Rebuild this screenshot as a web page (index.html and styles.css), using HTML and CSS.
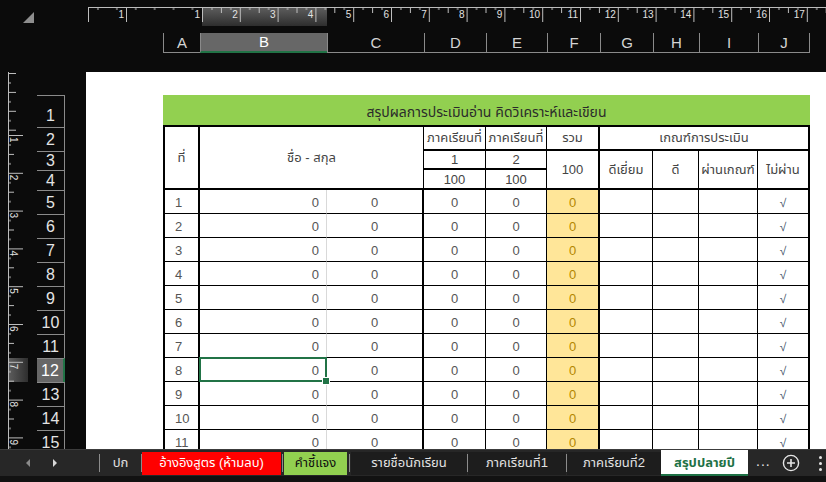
FILE: index.html
```html
<!DOCTYPE html>
<html lang="th">
<head>
<meta charset="utf-8">
<title>สรุปปลายปี</title>
<link rel="stylesheet" href="styles.css">
</head>
<body>
<div class="app">
  <div class="top">
    <div class="corner"><span class="tri"></span></div>
    <div class="topright">
      <svg class="hruler" width="738" height="19" viewBox="0 0 738 19">
        <defs>
          <linearGradient id="hl" x1="0" y1="0" x2="0" y2="1">
            <stop offset="0" stop-color="#5c5c5c"/>
            <stop offset="1" stop-color="#2e2e2e"/>
          </linearGradient>
          <pattern id="tk" x="114" y="0" width="37.8" height="19" patternUnits="userSpaceOnUse">
            <path d="M0.5 0V15M19.4 0V6M9.95 0V3M28.85 0V3" stroke="#bdbdbd" stroke-width="1" fill="none"/>
          </pattern>
          <pattern id="tkm" x="0" y="0" width="18.9" height="19" patternUnits="userSpaceOnUse">
            <path d="M9.95 0V3M19.4 0V5" stroke="#bdbdbd" fill="none"/>
          </pattern>
        </defs>
        <rect x="114" y="1" width="125" height="18" fill="url(#hl)"/>
        <rect x="0" y="0" width="114" height="19" fill="url(#tkm)"/>
        <rect x="114" y="0" width="624" height="19" fill="url(#tk)"/>
        <rect x="0" y="0" width="738" height="1" fill="#bdbdbd"/>
        <path d="M0.5 0V15M38.5 0V15" stroke="#bdbdbd" fill="none"/>
        <g class="rnum" text-anchor="end">
          <text x="36" y="11">1</text>
          <text x="112" y="11">1</text>
          <text x="149.8" y="11">2</text>
          <text x="187.6" y="11">3</text>
          <text x="225.4" y="11">4</text>
          <text x="263.2" y="11">5</text>
          <text x="301" y="11">6</text>
          <text x="338.8" y="11">7</text>
          <text x="376.6" y="11">8</text>
          <text x="414.4" y="11">9</text>
          <text x="452.2" y="11">10</text>
          <text x="490" y="11">11</text>
          <text x="527.8" y="11">12</text>
          <text x="565.6" y="11">13</text>
          <text x="603.4" y="11">14</text>
          <text x="641.2" y="11">15</text>
          <text x="679" y="11">16</text>
          <text x="716.8" y="11">17</text>
        </g>
      </svg>
      <div class="colheads">
        <div class="chd">A</div>
        <div class="chd chd-sel">B</div>
        <div class="chd">C</div>
        <div class="chd">D</div>
        <div class="chd">E</div>
        <div class="chd">F</div>
        <div class="chd">G</div>
        <div class="chd">H</div>
        <div class="chd">I</div>
        <div class="chd chd-last">J</div>
      </div>
    </div>
  </div>

  <div class="main">
    <div class="side">
      <svg class="vruler" width="22" height="377" viewBox="0 0 22 377">
        <defs>
          <linearGradient id="vhl" x1="0" y1="0" x2="1" y2="0">
            <stop offset="0" stop-color="#5c5c5c"/>
            <stop offset="1" stop-color="#2e2e2e"/>
          </linearGradient>
          <pattern id="vtk" x="0" y="63" width="22" height="37.8" patternUnits="userSpaceOnUse">
            <path d="M0 0.5H15M0 19.4H6M0 9.95H3M0 28.85H3" stroke="#bdbdbd" stroke-width="1" fill="none"/>
          </pattern>
          <pattern id="vtkm" x="0" y="1" width="22" height="18.9" patternUnits="userSpaceOnUse">
            <path d="M0 0.5H8M0 9.95H3" stroke="#bdbdbd" fill="none"/>
          </pattern>
        </defs>
        <rect x="1" y="286" width="19" height="24" fill="url(#vhl)"/>
        <rect x="0" y="0" width="22" height="63" fill="url(#vtkm)"/>
        <rect x="0" y="63" width="22" height="314" fill="url(#vtk)"/>
        <rect x="0" y="0" width="1" height="377" fill="#bdbdbd"/>
        <g class="rnum">
          <text transform="translate(2 65) rotate(90)">1</text>
          <text transform="translate(2 102.8) rotate(90)">2</text>
          <text transform="translate(2 140.6) rotate(90)">3</text>
          <text transform="translate(2 178.4) rotate(90)">4</text>
          <text transform="translate(2 216.2) rotate(90)">5</text>
          <text transform="translate(2 254) rotate(90)">6</text>
          <text transform="translate(2 291.8) rotate(90)">7</text>
          <text transform="translate(2 329.6) rotate(90)">8</text>
          <text transform="translate(2 367.4) rotate(90)">9</text>
        </g>
      </svg>
      <div class="rowheads">
        <div class="rh rh-1">1</div>
        <div class="rh rh-2">2</div>
        <div class="rh rh-3">3</div>
        <div class="rh rh-4">4</div>
        <div class="rh">5</div>
        <div class="rh">6</div>
        <div class="rh">7</div>
        <div class="rh">8</div>
        <div class="rh">9</div>
        <div class="rh">10</div>
        <div class="rh">11</div>
        <div class="rh rh-sel">12</div>
        <div class="rh">13</div>
        <div class="rh">14</div>
        <div class="rh">15</div>
      </div>
    </div>

    <div class="page">
      <div class="sheet">
        <div class="title">สรุปผลการประเมินอ่าน คิดวิเคราะห์และเขียน</div>

        <div class="hc h-no rs3">ที่</div>
        <div class="hc h-name cs2 rs3">ชื่อ - สกุล</div>
        <div class="hc">ภาคเรียนที่</div>
        <div class="hc">ภาคเรียนที่</div>
        <div class="hc thick-r">รวม</div>
        <div class="hc cs4 thick-r">เกณฑ์การประเมิน</div>

        <div class="hc">1</div>
        <div class="hc">2</div>
        <div class="hc rs2 thick-r">100</div>
        <div class="hc rs2">ดีเยี่ยม</div>
        <div class="hc rs2">ดี</div>
        <div class="hc rs2">ผ่านเกณฑ์</div>
        <div class="hc rs2 thick-r">ไม่ผ่าน</div>

        <div class="hc">100</div>
        <div class="hc">100</div>

        <div class="c ca">1</div><div class="c cb">0</div><div class="c cc">0</div><div class="c">0</div><div class="c">0</div><div class="c cf">0</div><div class="c"></div><div class="c"></div><div class="c"></div><div class="c cj">√</div>
        <div class="c ca">2</div><div class="c cb">0</div><div class="c cc">0</div><div class="c">0</div><div class="c">0</div><div class="c cf">0</div><div class="c"></div><div class="c"></div><div class="c"></div><div class="c cj">√</div>
        <div class="c ca">3</div><div class="c cb">0</div><div class="c cc">0</div><div class="c">0</div><div class="c">0</div><div class="c cf">0</div><div class="c"></div><div class="c"></div><div class="c"></div><div class="c cj">√</div>
        <div class="c ca">4</div><div class="c cb">0</div><div class="c cc">0</div><div class="c">0</div><div class="c">0</div><div class="c cf">0</div><div class="c"></div><div class="c"></div><div class="c"></div><div class="c cj">√</div>
        <div class="c ca">5</div><div class="c cb">0</div><div class="c cc">0</div><div class="c">0</div><div class="c">0</div><div class="c cf">0</div><div class="c"></div><div class="c"></div><div class="c"></div><div class="c cj">√</div>
        <div class="c ca">6</div><div class="c cb">0</div><div class="c cc">0</div><div class="c">0</div><div class="c">0</div><div class="c cf">0</div><div class="c"></div><div class="c"></div><div class="c"></div><div class="c cj">√</div>
        <div class="c ca">7</div><div class="c cb">0</div><div class="c cc">0</div><div class="c">0</div><div class="c">0</div><div class="c cf">0</div><div class="c"></div><div class="c"></div><div class="c"></div><div class="c cj">√</div>
        <div class="c ca">8</div><div class="c cb sel">0</div><div class="c cc">0</div><div class="c">0</div><div class="c">0</div><div class="c cf">0</div><div class="c"></div><div class="c"></div><div class="c"></div><div class="c cj">√</div>
        <div class="c ca">9</div><div class="c cb">0</div><div class="c cc">0</div><div class="c">0</div><div class="c">0</div><div class="c cf">0</div><div class="c"></div><div class="c"></div><div class="c"></div><div class="c cj">√</div>
        <div class="c ca">10</div><div class="c cb">0</div><div class="c cc">0</div><div class="c">0</div><div class="c">0</div><div class="c cf">0</div><div class="c"></div><div class="c"></div><div class="c"></div><div class="c cj">√</div>
        <div class="c ca">11</div><div class="c cb">0</div><div class="c cc">0</div><div class="c">0</div><div class="c">0</div><div class="c cf">0</div><div class="c"></div><div class="c"></div><div class="c"></div><div class="c cj">√</div>
      </div>
    </div>
  </div>

  <div class="tabs">
    <div class="nav">
      <span class="arr arr-l"></span>
      <span class="arr arr-r"></span>
    </div>
    <span class="sep"></span>
    <div class="tab tab-cover">ปก</div>
    <span class="sep"></span>
    <div class="tab tab-red">อ้างอิงสูตร (ห้ามลบ)</div>
    <span class="sep sep-gap"></span>
    <div class="tab tab-green">คำชี้แจง</div>
    <span class="sep sep-gap2"></span>
    <div class="tab tab-dark tab-w1">รายชื่อนักเรียน</div>
    <span class="sep"></span>
    <div class="tab tab-dark tab-w2">ภาคเรียนที่1</div>
    <span class="sep"></span>
    <div class="tab tab-dark tab-w3">ภาคเรียนที่2</div>
    <div class="tab tab-active">สรุปปลายปี</div>
    <div class="more">...</div>
    <svg class="addbtn" width="18" height="18" viewBox="0 0 18 18">
      <circle cx="9" cy="9" r="7.6" fill="none" stroke="#e6e6e6" stroke-width="1.4"/>
      <path d="M9 5V13M5 9H13" stroke="#e6e6e6" stroke-width="1.6"/>
    </svg>
    <div class="kebab"><span></span><span></span><span></span></div>
  </div>
  <div class="status"></div>
</div>
</body>
</html>
```

FILE: styles.css
```css
* { box-sizing: border-box; }

html, body {
  margin: 0;
  padding: 0;
  background: #0b0b0b;
}

body {
  width: 826px;
  height: 482px;
  overflow: hidden;
  font-family: "Liberation Sans", "Noto Sans", "Noto Sans Thai", Tahoma, sans-serif;
}

.app {
  display: flex;
  flex-direction: column;
  width: 826px;
  height: 482px;
}

/* ---------- top: corner, ruler, column headers ---------- */
.top {
  display: flex;
  height: 72px;
  flex: none;
}

.corner {
  width: 88px;
  padding: 12px 0 0 23px;
}

.tri {
  display: block;
  width: 0;
  height: 0;
  border-left: 11px solid transparent;
  border-bottom: 11px solid #8e8e8e;
}

.topright {
  flex: 1;
  padding-top: 7px;
  display: flex;
  flex-direction: column;
}

.hruler, .vruler { display: block; }

.rnum text {
  font-family: "Liberation Sans", sans-serif;
  font-size: 10px;
  fill: #e2e2e2;
}

.colheads {
  margin-top: 7px;
  margin-left: 75px;
  display: grid;
  grid-template-columns: 37px 127px 97px 62px 61px 53px 53px 46px 59px 52px;
  height: 20px;
  width: 647px;
  border-bottom: 1px solid #8a8a8a;
}

.chd {
  border-left: 1px solid #8a8a8a;
  color: #d4d4d4;
  font-size: 15px;
  line-height: 19px;
  text-align: center;
}

.chd-last { border-right: 1px solid #8a8a8a; }

.chd-sel {
  background: #676767;
  color: #ffffff;
  border-bottom: 2px solid #217346;
  line-height: 18px;
}

/* ---------- main: side rulers, row headers, page ---------- */
.main {
  display: flex;
  height: 377px;
  flex: none;
}

.side {
  width: 86px;
  flex: none;
  display: flex;
  align-items: flex-start;
}

.vruler { margin-left: 8px; }

.rowheads {
  margin-left: 7px;
  margin-top: 23px;
  width: 28px;
  display: flex;
  flex-direction: column;
}

.rh {
  height: 24px;
  border-top: 1px solid #8a8a8a;
  border-right: 1px solid #8a8a8a;
  color: #e4e4e4;
  font-size: 16px;
  line-height: 18px;
  display: flex;
  align-items: flex-end;
  justify-content: center;
  padding-bottom: 2px;
  flex: none;
}

.rh-1 { height: 32px; }
.rh-2 { height: 24px; }
.rh-3 { height: 19px; padding-bottom: 0; }
.rh-4 { height: 20px; padding-bottom: 0; }

.rh-sel {
  background: #676767;
  color: #ffffff;
  border-right: 2px solid #217346;
}

.page {
  flex: 1;
  background: #ffffff;
  padding: 23px 0 0 77px;
  overflow: hidden;
}

/* ---------- sheet grid ---------- */
.sheet {
  display: grid;
  grid-template-columns: 37px 127px 97px 62px 61px 53px 53px 46px 59px 52px;
  grid-template-rows: 32px 24px 19px 20px repeat(11, 24px);
  width: 647px;
  font-size: 13px;
  color: #555555;
}

.title {
  grid-column: 1 / -1;
  background: #92d050;
  border-bottom: 2px solid #000;
  color: #2b2b2b;
  font-size: 14px;
  display: flex;
  align-items: center;
  justify-content: center;
  padding-top: 4px;
}

.hc {
  border-right: 1px solid #000;
  border-bottom: 2px solid #000;
  display: flex;
  align-items: center;
  justify-content: center;
  white-space: nowrap;
  color: #444444;
  overflow: visible;
}

.h-no {
  border-left: 2px solid #000;
  border-right-width: 2px;
}

.thick-r { border-right-width: 2px; }
.rs2 { grid-row: span 2; }
.rs3 { grid-row: span 3; }
.cs2 { grid-column: span 2; }
.cs4 { grid-column: span 4; }

.c {
  border-right: 1px solid #000;
  border-bottom: 1px solid #000;
  display: flex;
  align-items: center;
  justify-content: center;
  padding-top: 2px;
  position: relative;
}

.ca {
  border-left: 2px solid #000;
  border-right-width: 2px;
  justify-content: flex-start;
  padding-left: 10px;
}

.cb {
  justify-content: flex-end;
  padding-right: 7px;
  border-right-color: #d9d9d9;
}

.cc { border-right-width: 2px; }

.cf {
  background: #ffe699;
  color: #b38600;
  border-right-width: 2px;
}

.cj {
  border-right-width: 2px;
  color: #44546a;
  font-size: 12px;
}

.sel::after {
  content: "";
  position: absolute;
  left: -1px;
  top: -1px;
  right: -1px;
  bottom: -1px;
  border: 2px solid #217346;
}

.sel::before {
  content: "";
  position: absolute;
  right: -4px;
  bottom: -4px;
  width: 6px;
  height: 6px;
  background: #217346;
  border: 1px solid #ffffff;
  z-index: 2;
}

/* ---------- sheet tabs ---------- */
.tabs {
  display: flex;
  align-items: center;
  height: 27px;
  flex: none;
  background: #272727;
  border-top: 1px solid #3c3c3c;
  font-size: 13px;
}

.nav {
  width: 99px;
  height: 100%;
  display: flex;
  align-items: center;
  padding-left: 26px;
  gap: 23px;
}

.arr {
  width: 0;
  height: 0;
  border-top: 4px solid transparent;
  border-bottom: 4px solid transparent;
}

.arr-l { border-right: 4px solid #8a8a8a; }
.arr-r { border-left: 4px solid #d8d8d8; }

.sep {
  width: 1px;
  height: 18px;
  background: #8c8c8c;
  flex: none;
}

.sep-gap { margin: 0 1px; }
.sep-gap2 { margin: 0 1px 0 2px; }

.tab {
  height: 23px;
  display: flex;
  align-items: center;
  justify-content: center;
  color: #e2e2e2;
  white-space: nowrap;
  flex: none;
}

.tab-cover { width: 41px; }

.tab-red {
  width: 139px;
  background: #ff0000;
  color: #ffffff;
}

.tab-green {
  width: 63px;
  background: #92d050;
  color: #111111;
}

.tab-dark { background: #1d1d1d; }
.tab-w1 { width: 116px; }
.tab-w2 { width: 98px; }
.tab-w3 { width: 94px; }

.tab-active {
  width: 87px;
  height: 26px;
  background: #ffffff;
  color: #1e7145;
  font-weight: bold;
  border-bottom: 2px solid #1e7145;
  padding-top: 1px;
}

.more {
  margin-left: 8px;
  color: #e6e6e6;
  font-size: 14px;
  letter-spacing: 1px;
  padding-bottom: 4px;
}

.addbtn {
  display: block;
  margin-left: 11px;
}

.kebab {
  margin-left: 19px;
  display: flex;
  flex-direction: column;
  gap: 3px;
}

.kebab span {
  width: 3px;
  height: 3px;
  background: #e6e6e6;
  border-radius: 50%;
}

.status {
  height: 6px;
  flex: none;
  background: #121212;
}
```
